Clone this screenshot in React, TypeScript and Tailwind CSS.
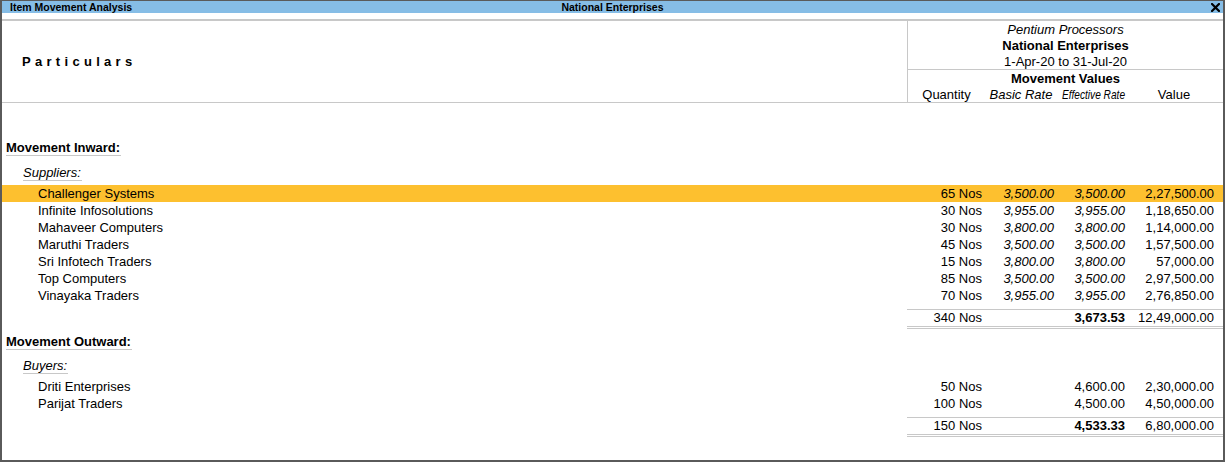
import React from "react";

type Row = { name: string; qty: string; br: string; er: string; val: string; hl?: boolean };

const suppliers: Row[] = [
  { name: "Challenger Systems", qty: "65 Nos", br: "3,500.00", er: "3,500.00", val: "2,27,500.00", hl: true },
  { name: "Infinite Infosolutions", qty: "30 Nos", br: "3,955.00", er: "3,955.00", val: "1,18,650.00" },
  { name: "Mahaveer Computers", qty: "30 Nos", br: "3,800.00", er: "3,800.00", val: "1,14,000.00" },
  { name: "Maruthi Traders", qty: "45 Nos", br: "3,500.00", er: "3,500.00", val: "1,57,500.00" },
  { name: "Sri Infotech Traders", qty: "15 Nos", br: "3,800.00", er: "3,800.00", val: "57,000.00" },
  { name: "Top Computers", qty: "85 Nos", br: "3,500.00", er: "3,500.00", val: "2,97,500.00" },
  { name: "Vinayaka Traders", qty: "70 Nos", br: "3,955.00", er: "3,955.00", val: "2,76,850.00" },
];

const buyers: Row[] = [
  { name: "Driti Enterprises", qty: "50 Nos", br: "", er: "4,600.00", val: "2,30,000.00" },
  { name: "Parijat Traders", qty: "100 Nos", br: "", er: "4,500.00", val: "4,50,000.00" },
];

function DataRow({ r, italicRates }: { r: Row; italicRates: boolean }) {
  return (
    <div className={`flex h-[17px] items-center leading-[17px] ${r.hl ? "bg-[#fdc02f]" : ""}`}>
      <div className="flex-1 pl-[36px] whitespace-nowrap">{r.name}</div>
      <div className="w-[316px] grid grid-cols-[75px_72px_71px_1fr]">
        <div className="text-right whitespace-nowrap">{r.qty}</div>
        <div className={`text-right whitespace-nowrap ${italicRates ? "italic" : ""}`}>{r.br}</div>
        <div className={`text-right whitespace-nowrap ${italicRates ? "italic" : ""}`}>{r.er}</div>
        <div className="text-right whitespace-nowrap pr-[9px]">{r.val}</div>
      </div>
    </div>
  );
}

function TotalRow({ qty, er, val }: { qty: string; er: string; val: string }) {
  return (
    <div className="flex mt-[5px]">
      <div className="flex-1" />
      <div className="w-[316px] border-t border-b-[3px] border-double border-t-[#c8c8c8] border-b-[#c8c8c8]">
        <div className="grid grid-cols-[75px_72px_71px_1fr] h-[16px] leading-[16px]">
          <div className="text-right whitespace-nowrap">{qty}</div>
          <div />
          <div className="text-right whitespace-nowrap font-bold">{er}</div>
          <div className="text-right whitespace-nowrap pr-[9px]">{val}</div>
        </div>
      </div>
    </div>
  );
}

function Label({ text, kind, pl, mt }: { text: string; kind: "bold" | "italic"; pl: string; mt: string }) {
  return (
    <div className={`flex ${pl} ${mt}`}>
      <div
        className={`h-[16px] leading-[15px] border-b border-[#c8c8c8] pr-[1px] whitespace-nowrap ${
          kind === "bold" ? "font-bold" : "italic"
        }`}
      >
        {text}
      </div>
    </div>
  );
}

export default function App() {
  return (
    <div className="w-[1225px] h-[462px] bg-white border-x-2 border-b-2 border-t border-[#5a5a5a] flex flex-col overflow-hidden text-black text-[13px] font-['Liberation_Sans',Arial,sans-serif]">
      {/* Title bar */}
      <div className="h-[12px] bg-[#86bde6] flex items-center relative shrink-0">
        <div className="pl-[8px] text-[10.5px] font-bold leading-[12px] whitespace-nowrap">Item Movement Analysis</div>
        <div className="absolute left-0 right-0 top-0 text-center text-[10.5px] font-bold leading-[12px] pointer-events-none">
          National Enterprises
        </div>
        <div className="ml-auto mr-[3px] flex items-center">
          <svg width="9" height="9" viewBox="0 0 9 9">
            <path d="M1 1 L8 8 M8 1 L1 8" stroke="#000" strokeWidth="2.2" strokeLinecap="square" />
          </svg>
        </div>
      </div>
      <div className="h-[6px] shrink-0" />
      {/* Header */}
      <div className="flex h-[84px] shrink-0 border-t-2 border-b border-[#c8c8c8]">
        <div className="flex-1 flex items-center pl-[20px]">
          <span className="font-bold tracking-[4.3px]">Particulars</span>
        </div>
        <div className="w-[316px] border-l border-[#c8c8c8] flex flex-col">
          <div className="border-b border-[#c8c8c8] h-[49px] pt-[1px] flex flex-col items-center">
            <div className="h-[16px] leading-[16px] italic">Pentium Processors</div>
            <div className="h-[16px] leading-[16px] font-bold">National Enterprises</div>
            <div className="h-[16px] leading-[16px]">1-Apr-20 to 31-Jul-20</div>
          </div>
          <div className="h-[16px] leading-[16px] mt-[1px] text-center font-bold">Movement Values</div>
          <div className="h-[16px] leading-[16px] grid grid-cols-[74px_72px_71px_1fr]">
            <div className="text-center pl-[3px]">Quantity</div>
            <div className="text-center italic pl-[6px]">Basic Rate</div>
            <div className="text-center italic whitespace-nowrap">
              <span className="inline-block scale-x-[0.78] origin-center -ml-[1px]">Effective Rate</span>
            </div>
            <div className="text-center">Value</div>
          </div>
        </div>
      </div>
      {/* Body */}
      <div className="flex flex-col">
        <Label text="Movement Inward:" kind="bold" pl="pl-[4px]" mt="mt-[37px]" />
        <Label text="Suppliers:" kind="italic" pl="pl-[21px]" mt="mt-[9px]" />
        <div className="mt-[4px] flex flex-col">
          {suppliers.map((r) => (
            <DataRow key={r.name} r={r} italicRates />
          ))}
        </div>
        <TotalRow qty="340 Nos" er="3,673.53" val="12,49,000.00" />

        <Label text="Movement Outward:" kind="bold" pl="pl-[4px]" mt="mt-[5px]" />
        <Label text="Buyers:" kind="italic" pl="pl-[21px]" mt="mt-[8px]" />
        <div className="mt-[4px] flex flex-col">
          {buyers.map((r) => (
            <DataRow key={r.name} r={r} italicRates={false} />
          ))}
        </div>
        <TotalRow qty="150 Nos" er="4,533.33" val="6,80,000.00" />
      </div>
    </div>
  );
}
